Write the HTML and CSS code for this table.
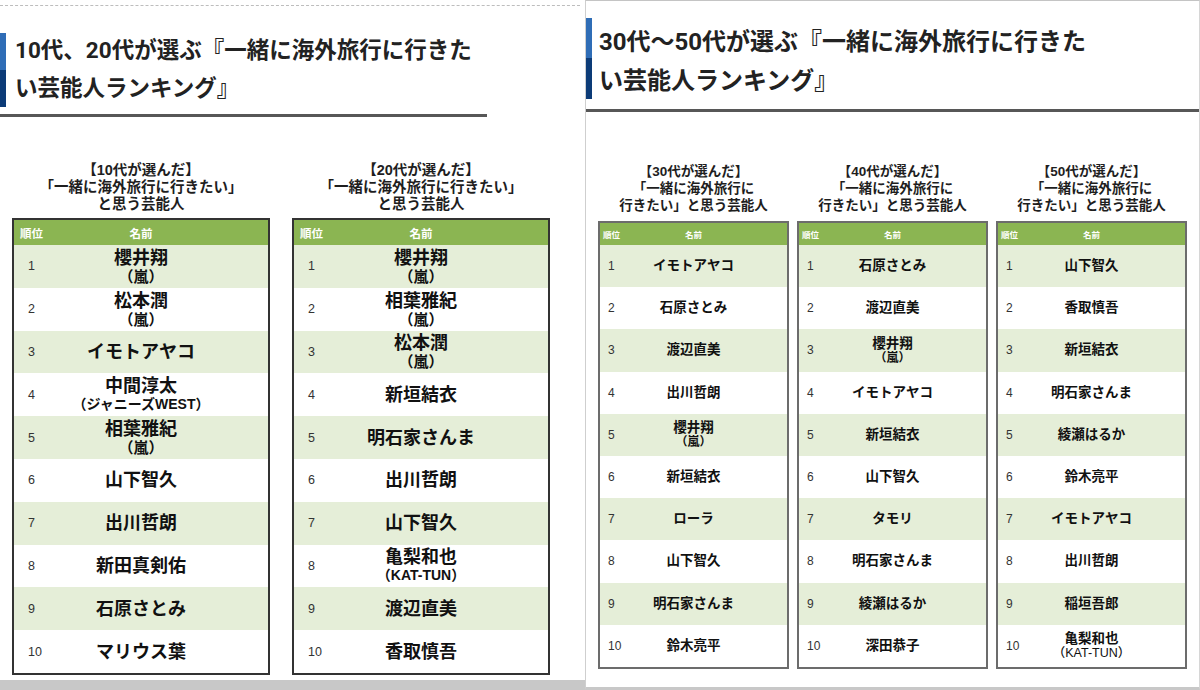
FILE: index.html
```html
<!DOCTYPE html>
<html lang="ja">
<head>
<meta charset="utf-8">
<title>一緒に海外旅行に行きたい芸能人ランキング</title>
<link rel="stylesheet" href="styles.css">
</head>
<body>
<div class="page">
  <section class="panel panel-left">
    <div class="dash"></div>
    <h2 class="title title-left"><span class="bar"></span><span class="title-text">10代、20代が選ぶ『一緒に海外旅行に行きた<br>い芸能人ランキング』</span></h2>
    <div class="rule rule-left"></div>
    <div class="tables tables-left">
      <div class="block">
        <p class="caption">【10代が選んだ】<br>「一緒に海外旅行に行きたい」<br>と思う芸能人</p>
        <div class="table">
          <div class="thead"><span class="th-num">順位</span><span class="th-name">名前</span></div>
          <div class="row"><span class="num">1</span><span class="name"><b>櫻井翔</b><small>（嵐）</small></span></div>
          <div class="row"><span class="num">2</span><span class="name"><b>松本潤</b><small>（嵐）</small></span></div>
          <div class="row"><span class="num">3</span><span class="name"><b>イモトアヤコ</b></span></div>
          <div class="row"><span class="num">4</span><span class="name"><b>中間淳太</b><small class="xs">（ジャニーズWEST）</small></span></div>
          <div class="row"><span class="num">5</span><span class="name"><b>相葉雅紀</b><small>（嵐）</small></span></div>
          <div class="row"><span class="num">6</span><span class="name"><b>山下智久</b></span></div>
          <div class="row"><span class="num">7</span><span class="name"><b>出川哲朗</b></span></div>
          <div class="row"><span class="num">8</span><span class="name"><b>新田真剣佑</b></span></div>
          <div class="row"><span class="num">9</span><span class="name"><b>石原さとみ</b></span></div>
          <div class="row"><span class="num">10</span><span class="name"><b>マリウス葉</b></span></div>
        </div>
      </div>
      <div class="block">
        <p class="caption">【20代が選んだ】<br>「一緒に海外旅行に行きたい」<br>と思う芸能人</p>
        <div class="table">
          <div class="thead"><span class="th-num">順位</span><span class="th-name">名前</span></div>
          <div class="row"><span class="num">1</span><span class="name"><b>櫻井翔</b><small>（嵐）</small></span></div>
          <div class="row"><span class="num">2</span><span class="name"><b>相葉雅紀</b><small>（嵐）</small></span></div>
          <div class="row"><span class="num">3</span><span class="name"><b>松本潤</b><small>（嵐）</small></span></div>
          <div class="row"><span class="num">4</span><span class="name"><b>新垣結衣</b></span></div>
          <div class="row"><span class="num">5</span><span class="name"><b>明石家さんま</b></span></div>
          <div class="row"><span class="num">6</span><span class="name"><b>出川哲朗</b></span></div>
          <div class="row"><span class="num">7</span><span class="name"><b>山下智久</b></span></div>
          <div class="row"><span class="num">8</span><span class="name"><b>亀梨和也</b><small class="xs">（KAT-TUN）</small></span></div>
          <div class="row"><span class="num">9</span><span class="name"><b>渡辺直美</b></span></div>
          <div class="row"><span class="num">10</span><span class="name"><b>香取慎吾</b></span></div>
        </div>
      </div>
    </div>
  </section>

  <section class="panel panel-right">
    <h2 class="title title-right"><span class="bar"></span><span class="title-text">30代～50代が選ぶ『一緒に海外旅行に行きた<br>い芸能人ランキング』</span></h2>
    <div class="rule rule-right"></div>
    <div class="tables tables-right">
      <div class="block">
        <p class="caption">【30代が選んだ】<br>「一緒に海外旅行に<br>行きたい」と思う芸能人</p>
        <div class="table">
          <div class="thead"><span class="th-num">順位</span><span class="th-name">名前</span></div>
          <div class="row"><span class="num">1</span><span class="name"><b>イモトアヤコ</b></span></div>
          <div class="row"><span class="num">2</span><span class="name"><b>石原さとみ</b></span></div>
          <div class="row"><span class="num">3</span><span class="name"><b>渡辺直美</b></span></div>
          <div class="row"><span class="num">4</span><span class="name"><b>出川哲朗</b></span></div>
          <div class="row"><span class="num">5</span><span class="name"><b>櫻井翔</b><small>（嵐）</small></span></div>
          <div class="row"><span class="num">6</span><span class="name"><b>新垣結衣</b></span></div>
          <div class="row"><span class="num">7</span><span class="name"><b>ローラ</b></span></div>
          <div class="row"><span class="num">8</span><span class="name"><b>山下智久</b></span></div>
          <div class="row"><span class="num">9</span><span class="name"><b>明石家さんま</b></span></div>
          <div class="row"><span class="num">10</span><span class="name"><b>鈴木亮平</b></span></div>
        </div>
      </div>
      <div class="block">
        <p class="caption">【40代が選んだ】<br>「一緒に海外旅行に<br>行きたい」と思う芸能人</p>
        <div class="table">
          <div class="thead"><span class="th-num">順位</span><span class="th-name">名前</span></div>
          <div class="row"><span class="num">1</span><span class="name"><b>石原さとみ</b></span></div>
          <div class="row"><span class="num">2</span><span class="name"><b>渡辺直美</b></span></div>
          <div class="row"><span class="num">3</span><span class="name"><b>櫻井翔</b><small>（嵐）</small></span></div>
          <div class="row"><span class="num">4</span><span class="name"><b>イモトアヤコ</b></span></div>
          <div class="row"><span class="num">5</span><span class="name"><b>新垣結衣</b></span></div>
          <div class="row"><span class="num">6</span><span class="name"><b>山下智久</b></span></div>
          <div class="row"><span class="num">7</span><span class="name"><b>タモリ</b></span></div>
          <div class="row"><span class="num">8</span><span class="name"><b>明石家さんま</b></span></div>
          <div class="row"><span class="num">9</span><span class="name"><b>綾瀬はるか</b></span></div>
          <div class="row"><span class="num">10</span><span class="name"><b>深田恭子</b></span></div>
        </div>
      </div>
      <div class="block">
        <p class="caption">【50代が選んだ】<br>「一緒に海外旅行に<br>行きたい」と思う芸能人</p>
        <div class="table">
          <div class="thead"><span class="th-num">順位</span><span class="th-name">名前</span></div>
          <div class="row"><span class="num">1</span><span class="name"><b>山下智久</b></span></div>
          <div class="row"><span class="num">2</span><span class="name"><b>香取慎吾</b></span></div>
          <div class="row"><span class="num">3</span><span class="name"><b>新垣結衣</b></span></div>
          <div class="row"><span class="num">4</span><span class="name"><b>明石家さんま</b></span></div>
          <div class="row"><span class="num">5</span><span class="name"><b>綾瀬はるか</b></span></div>
          <div class="row"><span class="num">6</span><span class="name"><b>鈴木亮平</b></span></div>
          <div class="row"><span class="num">7</span><span class="name"><b>イモトアヤコ</b></span></div>
          <div class="row"><span class="num">8</span><span class="name"><b>出川哲朗</b></span></div>
          <div class="row"><span class="num">9</span><span class="name"><b>稲垣吾郎</b></span></div>
          <div class="row"><span class="num">10</span><span class="name"><b>亀梨和也</b><small class="xs">（KAT-TUN）</small></span></div>
        </div>
      </div>
    </div>
  </section>
</div>
</body>
</html>
```

FILE: styles.css
```css
html, body {
  margin: 0;
  padding: 0;
}
body {
  background: #fff;
  font-family: "Liberation Sans", "Noto Sans CJK JP", sans-serif;
  color: #1a1a1a;
}
.page {
  display: flex;
  align-items: stretch;
  width: 1200px;
  height: 690px;
  overflow: hidden;
  background: #fff;
}
.panel {
  margin: 0;
  background: #fff;
  box-sizing: border-box;
  height: 690px;
}
.panel-left {
  width: 585px;
  padding-top: 5px;
  border-bottom: 10px solid #c8c8c8;
}
.panel-right {
  width: 615px;
  padding-top: 17px;
  border-top: 1px solid #c4c4c4;
  border-left: 1px solid #cfcfcf;
  border-right: 1px solid #d6d6d6;
  border-bottom: 3px solid #c8c8c8;
}
.dash {
  width: 580px;
  height: 0;
  border-top: 1px dashed #bdbdbd;
  margin-bottom: 25px;
}

/* headings */
.title {
  display: flex;
  align-items: flex-start;
  margin: 0;
  font-family: Roboto, "Noto Sans CJK JP", sans-serif;
  font-weight: 700;
  color: #222;
}
.bar {
  flex: none;
  width: 6px;
  background: linear-gradient(#2f6db6 0 50%, #0c3b77 50% 100%);
}
.title-left {
  font-size: 22.5px;
  line-height: 38px;
}
.title-left .bar {
  height: 74px;
  margin-top: 2px;
}
.title-left .title-text {
  padding-left: 9px;
}
.title-right {
  font-size: 24px;
  line-height: 39px;
}
.title-right .bar {
  height: 81px;
}
.title-right .title-text {
  padding-left: 7px;
  margin-top: 5px;
}
.rule {
  height: 3px;
  background: #575757;
}
.rule-left {
  width: 487px;
  margin-top: 7px;
}
.rule-right {
  margin-top: 8px;
}

/* tables */
.tables {
  display: flex;
}
.tables-left {
  margin-top: 45px;
  padding-left: 12px;
  gap: 22px;
}
.tables-right {
  margin-top: 51px;
  padding-left: 12px;
  gap: 8px;
}
.block {
  display: flex;
  flex-direction: column;
}
.tables-left .block {
  width: 258px;
}
.tables-right .block {
  width: 191px;
}
.caption {
  margin: 0;
  text-align: center;
  font-family: "Liberation Sans", "Noto Sans CJK JP", sans-serif;
  font-weight: 700;
  color: #1e1e1e;
  line-height: 17px;
}
.tables-left .caption {
  font-size: 14.5px;
  margin-bottom: 5px;
}
.tables-right .caption {
  font-size: 13.5px;
  margin-bottom: 7px;
}
.table {
  background: #fff;
}
.tables-left .table {
  border: 2px solid #333;
}
.tables-right .table {
  border: 2px solid #6c6c6c;
}
.thead,
.row {
  display: grid;
  align-items: center;
}
.tables-left .thead,
.tables-left .row {
  grid-template-columns: 40px 1fr 40px;
}
.tables-right .thead,
.tables-right .row {
  grid-template-columns: 30px 1fr 30px;
}
.thead {
  background: #8bb552;
  color: #fff;
  font-weight: 700;
  font-family: "Noto Sans CJK JP", sans-serif;
}
.tables-left .thead {
  height: 25px;
  font-size: 11.5px;
}
.tables-right .thead {
  height: 22px;
  font-size: 8.5px;
}
.tables-left .th-num {
  padding-left: 6px;
}
.tables-right .th-num {
  padding-left: 3px;
}
.th-name {
  text-align: center;
}
.row:nth-child(even) {
  background: #e5eed8;
}
.tables-left .row {
  height: 42.8px;
}
.tables-right .row {
  height: 42.2px;
}
.num {
  color: #333;
}
.tables-left .num {
  padding-left: 14px;
  font-size: 12.5px;
}
.tables-right .num {
  padding-left: 8px;
  font-size: 12px;
}
.name {
  display: flex;
  flex-direction: column;
  align-items: center;
  text-align: center;
  font-family: "Liberation Sans", "Noto Sans CJK JP", sans-serif;
  color: #111;
  white-space: nowrap;
}
.name b,
.name small {
  display: block;
  font-weight: 700;
}
.tables-left .name b {
  font-size: 18px;
  line-height: 20px;
}
.tables-left .name small {
  font-size: 15px;
  line-height: 17px;
}
.tables-left .name small.xs {
  font-size: 14px;
}
.tables-right .name b {
  font-size: 13.5px;
  line-height: 16px;
}
.tables-right .name small {
  font-size: 12px;
  line-height: 13px;
}
.tables-right .name small.xs {
  font-size: 12.5px;
  font-weight: 500;
}
```
